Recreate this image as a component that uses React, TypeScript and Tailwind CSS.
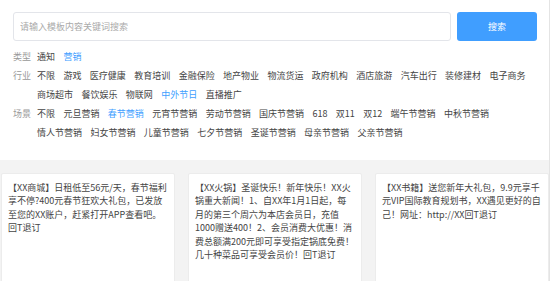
import { useState } from "react";

const industries = [
  "不限", "游戏", "医疗健康", "教育培训", "金融保险", "地产物业", "物流货运",
  "政府机构", "酒店旅游", "汽车出行", "装修建材", "电子商务", "商场超市",
  "餐饮娱乐", "物联网", "中外节日", "直播推广",
];

const scenes = [
  "不限", "元旦营销", "春节营销", "元宵节营销", "劳动节营销", "国庆节营销", "618",
  "双11", "双12", "端午节营销", "中秋节营销", "情人节营销", "妇女节营销",
  "儿童节营销", "七夕节营销", "圣诞节营销", "母亲节营销", "父亲节营销",
];

const templates = [
  "【XX商城】日租低至56元/天，春节福利享不停?400元春节狂欢大礼包，已发放至您的XX账户，赶紧打开APP查看吧。回T退订",
  "【XX火锅】圣诞快乐！新年快乐！XX火锅重大新闻！1、自XX年1月1日起，每月的第三个周六为本店会员日，充值1000赠送400！2、会员消费大优惠！消费总额满200元即可享受指定锅底免费！几十种菜品可享受会员价！回T退订",
  "【XX书籍】送您新年大礼包，9.9元享千元VIP国际教育规划书，XX遇见更好的自己！网址：http://XX回T退订",
];

function FilterRow({
  label,
  items,
  active,
  onPick,
}: {
  label: string;
  items: string[];
  active: string;
  onPick: (v: string) => void;
}) {
  return (
    <div className="flex gap-[6px] leading-[19px]">
      <span className="w-[18px] shrink-0 text-[#999]">{label}</span>
      <div className="flex flex-wrap gap-x-[8.4px]">
        {items.map((item) => (
          <button
            key={item}
            onClick={() => onPick(item)}
            className={item === active ? "text-[#409eff]" : "text-[#444]"}
          >
            {item}
          </button>
        ))}
      </div>
    </div>
  );
}

export default function App() {
  const [type, setType] = useState("营销");
  const [industry, setIndustry] = useState("中外节日");
  const [scene, setScene] = useState("春节营销");

  return (
    <div className="w-[551px] h-[281px] overflow-hidden bg-white pr-px font-['Noto_Sans_CJK_SC',sans-serif] text-[9px]">
      <div className="h-full border-r border-[#e4e4e4] flex flex-col">
        {/* Search + filters */}
        <div className="bg-white h-[160px] shrink-0 pl-[13px] pr-[12px] pt-[12px]">
          <div className="flex gap-[6px] h-[29px]">
            <input
              placeholder="请输入模板内容关键词搜索"
              className="flex-1 border border-[#e3e5ea] rounded-[3px] px-[6px] text-[9px] placeholder:text-[#aaa] outline-none"
            />
            <button className="w-[80px] rounded-[3px] bg-[#409eff] text-white">搜索</button>
          </div>

          <div className="mt-[6px]">
            <FilterRow label="类型" items={["通知", "营销"]} active={type} onPick={setType} />
            <FilterRow label="行业" items={industries} active={industry} onPick={setIndustry} />
            <FilterRow label="场景" items={scenes} active={scene} onPick={setScene} />
          </div>
        </div>

        {/* Template cards */}
        <div className="flex-1 bg-[#f3f3f3] pt-[13px] pl-px grid grid-cols-3 gap-x-[13px] items-start">
          {templates.map((t, i) => (
            <div
              key={i}
              className="h-[120px] bg-white border border-[#ececec] rounded-[2px] px-[6px] py-[7px] leading-[13.4px] text-[#444]"
            >
              {t}
            </div>
          ))}
        </div>
      </div>
    </div>
  );
}
